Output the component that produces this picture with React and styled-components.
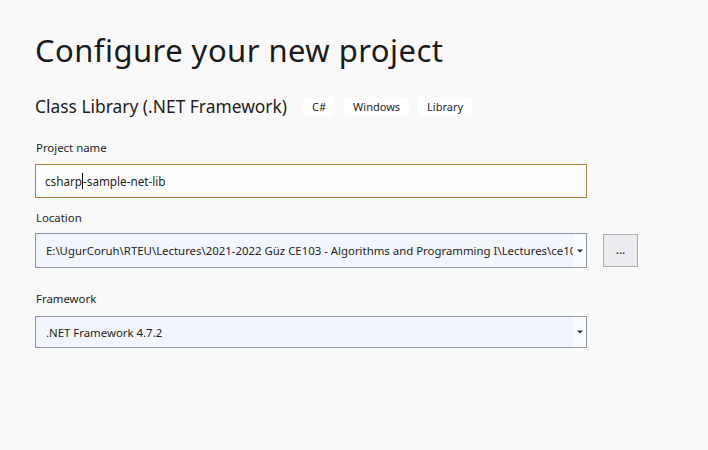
import React from "react";
import styled, { createGlobalStyle } from "styled-components";

const Global = createGlobalStyle`
  html, body { margin: 0; padding: 0; background: #f9f9f9; }
  body { font-family: "Noto Sans", "Open Sans", sans-serif; color: #1e1e1e; }
`;

const Page = styled.div`
  width: 708px;
  height: 450px;
  box-sizing: border-box;
  padding: 28px 0 0 35px;
  background: #f9f9f9;
  overflow: hidden;
`;

const Title = styled.h1`
  margin: 0;
  font-size: 31px;
  font-weight: 400;
  line-height: 44px;
  color: #1b1b1b;
  letter-spacing: 0.45px;
`;

const SubRow = styled.div`
  display: flex;
  align-items: center;
  gap: 9px;
  margin-top: 22px;
  height: 24px;
`;

const Sub = styled.div`
  font-size: 17.4px;
  line-height: 24px;
  margin-right: 7px;
`;

const Tag = styled.span`
  display: inline-flex;
  align-items: center;
  height: 19px;
  padding: 0 9px;
  background: #ffffff;
  border-radius: 4px;
  font-size: 11px;
  color: #1e1e1e;
`;

const Field = styled.div`
  margin-top: ${(p) => p.$top}px;
`;

const Label = styled.div`
  font-size: 11.4px;
  line-height: 16px;
  margin-left: 1px;
`;

const Row = styled.div`
  display: flex;
  align-items: flex-start;
  gap: 16px;
  margin-top: ${(p) => p.$gap}px;
`;

const TextBox = styled.div`
  box-sizing: border-box;
  width: 552px;
  height: 34px;
  border: 1px solid #a88038;
  background: #fdfdfd;
  display: flex;
  align-items: center;
  padding-left: 9px;
  font-size: 11.7px;
`;

const Caret = styled.span`
  display: inline-block;
  width: 1px;
  height: 16px;
  background: #000;
  vertical-align: middle;
`;

const Combo = styled.div`
  box-sizing: border-box;
  width: 552px;
  height: ${(p) => p.$h}px;
  border: 1px solid #8b94a3;
  background: #f2f5fc;
  display: flex;
  align-items: stretch;
  font-size: 11.4px;
`;

const ComboText = styled.div`
  flex: 1;
  min-width: 0;
  overflow: hidden;
  white-space: nowrap;
  display: flex;
  align-items: center;
  padding-left: 10px;
`;

const ComboArrow = styled.div`
  width: 13px;
  background: #fafbfd;
  display: flex;
  align-items: center;
  justify-content: center;
`;

const BrowseButton = styled.div`
  box-sizing: border-box;
  width: 35px;
  height: 33px;
  margin-top: 1px;
  background: #ececf0;
  border: 1px solid #adadad;
  display: flex;
  align-items: center;
  justify-content: center;
  font-size: 12px;
  padding-bottom: 2px;
`;

const Arrow = () => (
  <svg width="6" height="4" viewBox="0 0 6 4">
    <path d="M0 0.5 H6 L3 3.5 Z" fill="#2b2b2b" />
  </svg>
);

export default function App() {
  return (
    <Page>
      <Global />
      <Title>Configure your new project</Title>
      <SubRow>
        <Sub>Class Library (.NET Framework)</Sub>
        <Tag>C#</Tag>
        <Tag>Windows</Tag>
        <Tag>Library</Tag>
      </SubRow>
      <Field $top={22}>
        <Label>Project name</Label>
        <Row $gap={8}>
          <TextBox>
            csharp<Caret />-sample-net-lib
          </TextBox>
        </Row>
      </Field>
      <Field $top={12}>
        <Label>Location</Label>
        <Row $gap={7}>
          <Combo $h={35}>
            <ComboText>
              E:\UgurCoruh\RTEU\Lectures\2021-2022 Güz CE103 - Algorithms and Programming I\Lectures\ce103-algorithms-and-programming-I
            </ComboText>
            <ComboArrow>
              <Arrow />
            </ComboArrow>
          </Combo>
          <BrowseButton>...</BrowseButton>
        </Row>
      </Field>
      <Field $top={23}>
        <Label>Framework</Label>
        <Row $gap={9}>
          <Combo $h={32}>
            <ComboText>.NET Framework 4.7.2</ComboText>
            <ComboArrow>
              <Arrow />
            </ComboArrow>
          </Combo>
        </Row>
      </Field>
    </Page>
  );
}
